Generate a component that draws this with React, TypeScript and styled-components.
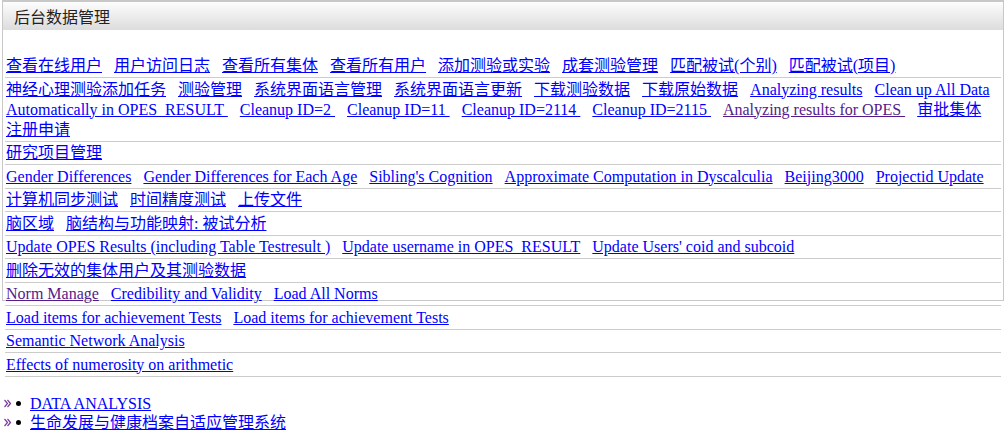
import React from "react";
import styled, { createGlobalStyle } from "styled-components";

const GlobalStyle = createGlobalStyle`
  html, body { margin: 0; padding: 0; background: #ffffff; }
  body {
    font-family: "Liberation Serif", "Noto Sans CJK SC", serif;
    font-size: 16px;
    color: #000;
  }
`;

const Page = styled.div`
  padding-left: 2px;
`;

const Panel = styled.div`
  box-sizing: border-box;
  width: 1002px;
  height: 301px;
  border: 1px solid #c8c8c8;
  border-top-width: 2px;
  overflow: visible;
`;

const Header = styled.div`
  height: 28px;
  line-height: 28px;
  padding-left: 11px;
  background: linear-gradient(#fdfdfd, #dcdcdc);
  font-family: "Noto Sans CJK SC", sans-serif;
  font-size: 16px;
  color: #222;
`;

const Table = styled.div`
  margin: 24.5px 0 0 2px;
  width: 996px;
`;

const Row = styled.div`
  padding: 1.5px 4px 1px 1px;
  line-height: 20px;
  border-bottom: 1px solid #cccccc;
`;

const Link = styled.a<{ $visited?: boolean }>`
  color: ${(p) => (p.$visited ? "#551a8b" : "#0000ff")};
  text-decoration: underline;
  margin-right: 12px;
  cursor: pointer;
  &:last-child {
    margin-right: 0;
  }
`;

const List = styled.ul`
  list-style: none;
  margin: 93px 0 0 0;
  padding: 0;
`;

const Item = styled.li`
  display: flex;
  align-items: center;
  height: 19px;
  line-height: 19px;
`;

const Chevron = styled.svg`
  margin-left: 1px;
  flex: none;
`;

const Bullet = styled.span`
  width: 5px;
  height: 5px;
  border-radius: 50%;
  background: #000;
  margin-left: 4px;
  flex: none;
`;

const ItemLink = styled.a`
  color: #0000ff;
  text-decoration: underline;
  margin-left: 9px;
  cursor: pointer;
`;

type L = { t: string; v?: boolean };

const rows: L[][] = [
  [
    { t: "查看在线用户" },
    { t: "用户访问日志" },
    { t: "查看所有集体" },
    { t: "查看所有用户" },
    { t: "添加测验或实验" },
    { t: "成套测验管理" },
    { t: "匹配被试(个别)" },
    { t: "匹配被试(项目)" },
  ],
  [
    { t: "神经心理测验添加任务" },
    { t: "测验管理" },
    { t: "系统界面语言管理" },
    { t: "系统界面语言更新" },
    { t: "下载测验数据" },
    { t: "下载原始数据" },
    { t: "Analyzing results" },
    { t: "Clean up All Data Automatically in OPES_RESULT " },
    { t: "Cleanup ID=2 " },
    { t: "Cleanup ID=11 " },
    { t: "Cleanup ID=2114 " },
    { t: "Cleanup ID=2115 " },
    { t: "Analyzing results for OPES ", v: true },
    { t: "审批集体注册申请" },
  ],
  [{ t: "研究项目管理" }],
  [
    { t: "Gender Differences" },
    { t: "Gender Differences for Each Age" },
    { t: "Sibling's Cognition" },
    { t: "Approximate Computation in Dyscalculia" },
    { t: "Beijing3000" },
    { t: "Projectid Update" },
  ],
  [{ t: "计算机同步测试" }, { t: "时间精度测试" }, { t: "上传文件" }],
  [{ t: "脑区域" }, { t: "脑结构与功能映射: 被试分析" }],
  [
    { t: "Update OPES Results (including Table Testresult )" },
    { t: "Update username in OPES_RESULT" },
    { t: "Update Users' coid and subcoid" },
  ],
  [{ t: "删除无效的集体用户及其测验数据" }],
  [
    { t: "Norm Manage", v: true },
    { t: "Credibility and Validity" },
    { t: "Load All Norms" },
  ],
  [
    { t: "Load items for achievement Tests" },
    { t: "Load items for achievement Tests" },
  ],
  [{ t: "Semantic Network Analysis" }],
  [{ t: "Effects of numerosity on arithmetic" }],
];

const items = ["DATA ANALYSIS", "生命发展与健康档案自适应管理系统"];

export default function App() {
  return (
    <Page>
      <GlobalStyle />
      <Panel>
        <Header>后台数据管理</Header>
        <Table>
          {rows.map((r, i) => (
            <Row key={i}>
              {r.map((l, j) => (
                <React.Fragment key={j}>
                  {j > 0 ? <wbr /> : null}
                  <Link $visited={l.v}>{l.t}</Link>
                </React.Fragment>
              ))}
            </Row>
          ))}
        </Table>
      </Panel>
      <List>
        {items.map((t) => (
          <Item key={t}>
            <Chevron width="9" height="9" viewBox="0 0 9 9">
              <path
                d="M1.5 1 L4.5 4.5 L1.5 8 M4.5 1 L7.5 4.5 L4.5 8"
                fill="none"
                stroke="#7a3a9e"
                strokeWidth="1.2"
              />
            </Chevron>
            <Bullet />
            <ItemLink>{t}</ItemLink>
          </Item>
        ))}
      </List>
    </Page>
  );
}
